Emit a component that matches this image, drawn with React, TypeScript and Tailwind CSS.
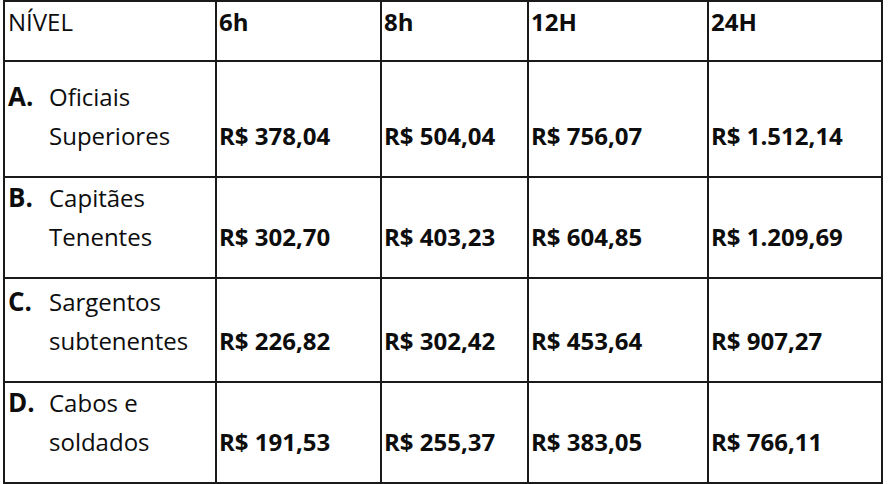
const rows = [
  { letter: 'A.', lines: ['Oficiais', 'Superiores'], values: ['R$ 378,04', 'R$ 504,04', 'R$ 756,07', 'R$ 1.512,14'] },
  { letter: 'B.', lines: ['Capitães', 'Tenentes'], values: ['R$ 302,70', 'R$ 403,23', 'R$ 604,85', 'R$ 1.209,69'] },
  { letter: 'C.', lines: ['Sargentos', 'subtenentes'], values: ['R$ 226,82', 'R$ 302,42', 'R$ 453,64', 'R$ 907,27'] },
  { letter: 'D.', lines: ['Cabos e', 'soldados'], values: ['R$ 191,53', 'R$ 255,37', 'R$ 383,05', 'R$ 766,11'] },
]

const headers = ['6h', '8h', '12H', '24H']

export default function App() {
  return (
    <div className="h-[484px] w-[888px] overflow-hidden bg-white font-['Open_Sans','Noto_Sans',sans-serif] text-[24px] text-[#0d0d0d]">
      <div className="ml-[3px] grid w-[880px] grid-cols-[210px_163px_145px_178px_172px] grid-rows-[58px_114px_99px_102px_99px] gap-[2px] bg-[#1a1a1a] p-[2px]">
        <div className="bg-white pl-[3px] leading-[39px]">NÍVEL</div>
        {headers.map((h) => (
          <div key={h} className="bg-white pl-[2px] font-bold leading-[39px]">
            {h}
          </div>
        ))}

        {rows.map((r) => (
          <>
            <div key={r.letter} className="flex items-end bg-white pb-[21px] pl-[3px] leading-[39px]">
              <div className="flex">
                <span className="w-[41px] text-[26px] font-bold">{r.letter}</span>
                <div>
                  {r.lines.map((l) => (
                    <div key={l}>{l}</div>
                  ))}
                </div>
              </div>
            </div>
            {r.values.map((v, i) => (
              <div key={r.letter + i} className="flex items-end bg-white pb-[21px] pl-[2px] font-bold leading-[39px]">
                {v}
              </div>
            ))}
          </>
        ))}
      </div>
    </div>
  )
}
